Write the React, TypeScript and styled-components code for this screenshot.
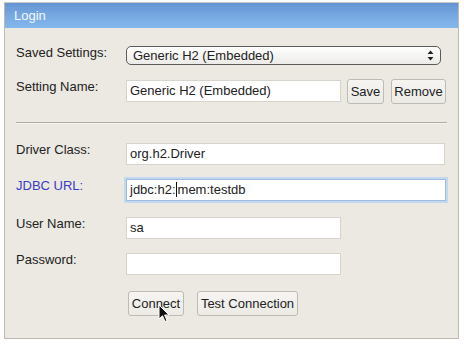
import styled, { createGlobalStyle } from 'styled-components';

const GlobalStyle = createGlobalStyle`
  html, body {
    margin: 0;
    padding: 0;
    background: #ffffff;
    font-family: "Liberation Sans", Arial, sans-serif;
    font-size: 13px;
    color: #222;
  }
`;

const Page = styled.div`
  padding: 2px 0 0 4px;
`;

const Panel = styled.div`
  position: relative;
  width: 455px;
  height: 337px;
  box-sizing: border-box;
  border: 1px solid #bcbab3;
  border-top-color: #c8c8c8;
  background: #ebe9e1;
`;

const Header = styled.div`
  height: 25px;
  line-height: 25px;
  padding-left: 9px;
  color: #f4f8fd;
  background: linear-gradient(to bottom, #6594d3 0%, #7aace4 60%, #84b8ec 100%);
`;

const Body = styled.div`
  padding: 18px 11px 0 11px;
`;

const Row = styled.div<{ $top?: number }>`
  display: flex;
  align-items: flex-start;
  margin-top: ${(p) => p.$top ?? 0}px;
`;

const Label = styled.div<{ $link?: boolean; $shift?: number }>`
  width: 110px;
  flex: none;
  line-height: 16px;
  margin-top: ${(p) => p.$shift ?? -1}px;
  color: ${(p) => (p.$link ? '#3b3bc9' : '#222')};
`;

const Select = styled.div`
  width: 315px;
  height: 19px;
  box-sizing: border-box;
  border: 1px solid #5c5c5c;
  border-radius: 5px;
  background: linear-gradient(to bottom, #ffffff, #ecebe8);
  display: flex;
  align-items: center;
  justify-content: space-between;
  padding: 0 6px 0 6px;
  line-height: 17px;
`;

const Field = styled.div<{ $w: number; $focus?: boolean; $shift?: number }>`
  position: relative;
  width: ${(p) => p.$w}px;
  height: 22px;
  margin-top: ${(p) => p.$shift ?? 0}px;
  box-sizing: border-box;
  background: #fff;
  border: 1px solid ${(p) => (p.$focus ? '#9bbbe0' : '#d6d4cd')};
  box-shadow: ${(p) => (p.$focus ? '0 0 0 2px #c4d9f0' : 'none')};
  padding: 0 3px;
  line-height: 20px;
  white-space: nowrap;
`;

const Caret = styled.span`
  display: inline-block;
  width: 1px;
  height: 15px;
  background: #111;
  vertical-align: -3px;
  margin: 0 0.5px;
`;

const Button = styled.div<{ $w: number }>`
  width: ${(p) => p.$w}px;
  height: 25px;
  box-sizing: border-box;
  border: 1px solid #bdbbb4;
  border-radius: 3px;
  background: linear-gradient(to bottom, #f6f5f2, #eceae5);
  display: flex;
  align-items: center;
  justify-content: center;
  color: #222;
`;

const Buttons = styled.div<{ $gap: number; $offset?: number }>`
  display: flex;
  gap: ${(p) => p.$gap}px;
  margin-left: ${(p) => p.$offset ?? 0}px;
`;

const Separator = styled.div`
  margin-top: 18px;
  height: 1px;
  width: 431px;
  background: #aeaca5;
  border-bottom: 1px solid #f6f5f1;
`;

const Pointer = styled.svg`
  position: absolute;
  left: 153px;
  top: 301px;
`;

function Arrows() {
  return (
    <svg width="7" height="11" viewBox="0 0 7 11">
      <path d="M3.5 0.5 L6.5 4 L0.5 4 Z" fill="#222" />
      <path d="M3.5 10.5 L6.5 7 L0.5 7 Z" fill="#222" />
    </svg>
  );
}

export default function App() {
  return (
    <Page>
      <GlobalStyle />
      <Panel>
        <Header>Login</Header>
        <Body>
          <Row>
            <Label>Saved Settings:</Label>
            <Select>
              <span>Generic H2 (Embedded)</span>
              <Arrows />
            </Select>
          </Row>
          <Row $top={14}>
            <Label $shift={0}>Setting Name:</Label>
            <Field $w={215} $shift={1}>Generic H2 (Embedded)</Field>
            <Buttons $gap={7} $offset={6}>
              <Button $w={37}>Save</Button>
              <Button $w={55}>Remove</Button>
            </Buttons>
          </Row>
          <Separator />
          <Row $top={19}>
            <Label>Driver Class:</Label>
            <Field $w={319}>org.h2.Driver</Field>
          </Row>
          <Row $top={14}>
            <Label $link>JDBC URL:</Label>
            <Field $w={320} $focus>
              jdbc:h2:<Caret />mem:testdb
            </Field>
          </Row>
          <Row $top={16}>
            <Label>User Name:</Label>
            <Field $w={215}>sa</Field>
          </Row>
          <Row $top={14}>
            <Label>Password:</Label>
            <Field $w={215}></Field>
          </Row>
          <Row $top={16}>
            <Label />
            <Buttons $gap={13} $offset={2}>
              <Button $w={56}>Connect</Button>
              <Button $w={101}>Test Connection</Button>
            </Buttons>
          </Row>
        </Body>
        <Pointer width="12" height="19" viewBox="0 0 12 19">
          <path
            d="M1 1 L1 15 L4.5 11.8 L7 17.5 L9 16.6 L6.6 11 L11 11 Z"
            fill="#111"
            stroke="#fff"
            strokeWidth="1"
            strokeLinejoin="round"
          />
        </Pointer>
      </Panel>
    </Page>
  );
}
